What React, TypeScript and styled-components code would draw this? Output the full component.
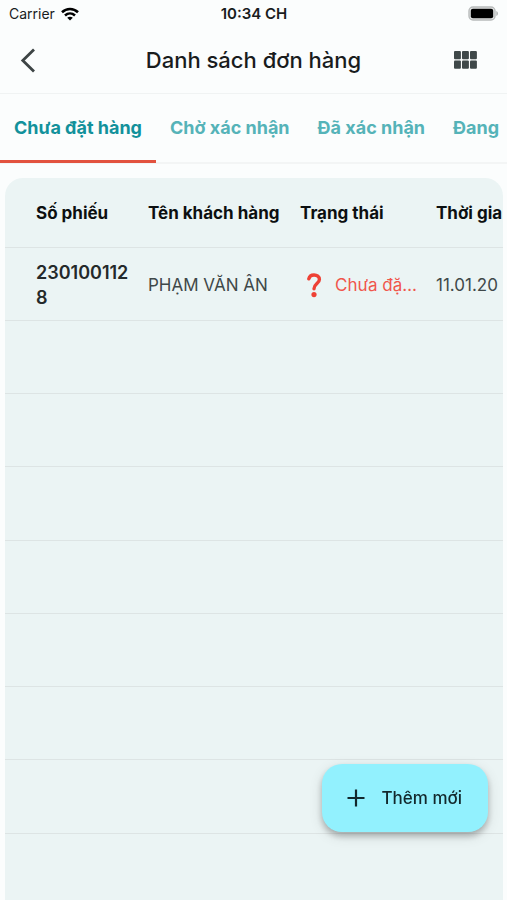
import React from "react";
import styled, { createGlobalStyle } from "styled-components";

const Global = createGlobalStyle`
  *, *::before, *::after { box-sizing: border-box; }
  body {
    margin: 0;
    background: #fbfdfd;
    color: #191c1d;
    font-family: Inter, "Noto Sans", sans-serif;
  }
`;

const ButtonBase = styled.button`
  font: inherit;
  color: inherit;
  border: 0;
  padding: 0;
  background: none;
  cursor: pointer;
`;

const Screen = styled.div`
  height: 100vh;
  display: flex;
  flex-direction: column;
  overflow: hidden;
`;

const StatusBar = styled.div`
  flex: none;
  height: 27px;
  padding: 0 8px 0 9px;
  display: grid;
  grid-template-columns: 1fr auto 1fr;
  align-items: center;
  font-size: 14px;
`;

const Carrier = styled.span`
  display: flex;
  align-items: center;
  gap: 6px;
`;

const Clock = styled.time`
  font-size: 15px;
  font-weight: 600;
`;

const Power = styled.span`
  display: flex;
  justify-content: flex-end;
`;

const AppBar = styled.header`
  flex: none;
  height: 67px;
  padding: 0 16px;
  display: grid;
  grid-template-columns: 48px 1fr 48px;
  align-items: center;
  border-bottom: 1px solid #f0f3f3;
`;

const Title = styled.h1`
  margin: 0;
  text-align: center;
  font-size: 22px;
  line-height: 28px;
  font-weight: 500;
`;

const IconButton = styled(ButtonBase)<{ $end?: boolean }>`
  height: 48px;
  display: flex;
  align-items: center;
  justify-content: ${(p) => (p.$end ? "flex-end" : "flex-start")};
  padding: 0 14px 0 4px;
`;

const Tabs = styled.nav`
  flex: none;
  height: 70px;
  display: flex;
  align-items: flex-start;
  overflow: hidden;
  box-shadow: inset 0 -2px #f3f5f5;
`;

const Tab = styled(ButtonBase)<{ $active?: boolean }>`
  flex: none;
  height: 69px;
  padding: 0 14px;
  font-size: 18px;
  font-weight: 700;
  white-space: nowrap;
  color: ${(p) => (p.$active ? "#12919b" : "#55b3b8")};
  border-bottom: 3px solid ${(p) => (p.$active ? "#e2523f" : "transparent")};
`;

const Panel = styled.main`
  flex: 1;
  min-height: 0;
  margin: 14px 4px 0 5px;
  border-radius: 18px 18px 0 0;
  background: #ebf4f4;
  overflow: hidden;
`;

const Orders = styled.table`
  width: 100%;
  table-layout: fixed;
  border-collapse: separate;
  border-spacing: 0;
  text-align: left;
  font-size: 17px;
  line-height: 25px;
`;

const Col = styled.col<{ $width?: number }>`
  width: ${(p) => (p.$width ? `${p.$width}px` : "auto")};
`;

const HeadCell = styled.th`
  height: 70px;
  padding: 2px 8px 0;
  font-weight: 700;
  white-space: nowrap;
  color: #0c0f10;
  border-bottom: 1px solid #dde4e4;
  &:first-child { padding-left: 31px; }
  &:last-child { padding-right: 0; }
`;

const Row = styled.tr`
  height: 73px;
  &:nth-child(4n) { height: 74px; }
`;

const Cell = styled.td<{ $strong?: boolean }>`
  padding: 2px 8px 0;
  color: ${(p) => (p.$strong ? "#24292a" : "#3f4849")};
  font-size: ${(p) => (p.$strong ? 18 : 17)}px;
  font-weight: ${(p) => (p.$strong ? 600 : 400)};
  word-break: ${(p) => (p.$strong ? "break-all" : "normal")};
  border-bottom: 1px solid #dde4e4;
  &:first-child { padding-left: 31px; }
  &:last-child { padding-right: 0; }
`;

const Status = styled.div`
  display: flex;
  align-items: center;
  gap: 13px;
  padding-left: 7px;
  color: #f0564c;
  svg { flex: none; }
`;

const StatusText = styled.span`
  overflow: hidden;
  text-overflow: ellipsis;
  white-space: nowrap;
`;

const AddButton = styled(ButtonBase)`
  position: fixed;
  right: 19px;
  bottom: 68px;
  height: 68px;
  padding: 0 26px 0 25px;
  display: flex;
  align-items: center;
  gap: 16px;
  border-radius: 20px;
  background: #92f1fe;
  color: #12282c;
  font-size: 17px;
  font-weight: 500;
  box-shadow: 0 4px 6px rgba(0, 0, 0, 0.24), 0 4px 14px rgba(0, 0, 0, 0.12);
`;

const WifiIcon = () => (
  <svg width="18" height="14" viewBox="0 0 18 14" fill="none" stroke="#000" strokeWidth="2.6" aria-hidden="true">
    <path d="M1 5.2C5.6.9 12.4.9 17 5.2" />
    <path d="M4 8.5c3-2.7 7-2.7 10 0" />
    <path d="M9 13.6 6.2 10.8c1.6-1.4 4-1.4 5.6 0z" fill="#000" stroke="none" />
  </svg>
);

const BatteryIcon = () => (
  <svg width="31" height="15" viewBox="0 0 31 15" aria-hidden="true">
    <rect x="1" y="1" width="26" height="13" rx="4" fill="#e4e6e6" stroke="#b8bbbb" strokeWidth="1.4" />
    <rect x="2.8" y="2.8" width="22.4" height="9.4" rx="2" fill="#000" />
    <path d="M28.3 5c2.2.8 2.2 4.2 0 5z" fill="#b0b3b3" />
  </svg>
);

const BackIcon = () => (
  <svg width="16" height="25" viewBox="0 0 16 25" fill="none" stroke="#3d4445" strokeWidth="2.8" aria-hidden="true">
    <path d="M14 1.5 2.8 12.5 14 23.5" />
  </svg>
);

const GridIcon = () => (
  <svg width="23" height="18" viewBox="0 0 23 18" fill="#3f4849" aria-hidden="true">
    {[0, 8, 16].map((x) =>
      [0, 9.4].map((y) => <rect key={`${x}-${y}`} x={x} y={y} width="6.9" height="8.3" rx="1" />)
    )}
  </svg>
);

const QuestionIcon = () => (
  <svg width="15" height="25" viewBox="0 0 15 25" fill="none" aria-hidden="true">
    <path
      d="M1.8 5.8C2.4 3.2 4.6 2 7 2c3 0 5.4 1.700 5.400 4.500 0 4-5.400 4.300-5.400 9.300"
      stroke="#ee4135"
      strokeWidth="3.4"
      strokeLinecap="round"
    />
    <circle cx="7" cy="21.6" r="2.6" fill="#ee4135" />
  </svg>
);

const PlusIcon = () => (
  <svg width="18" height="18" viewBox="0 0 18 18" stroke="#12282c" strokeWidth="2.2" aria-hidden="true">
    <path d="M9 .5v17M.5 9h17" />
  </svg>
);

const tabs = ["Chưa đặt hàng", "Chờ xác nhận", "Đã xác nhận", "Đang"];
const columns = ["Số phiếu", "Tên khách hàng", "Trạng thái", "Thời gia"];
const widths = [135, 152, 136, undefined];
const emptyRows = [1, 2, 3, 4, 5, 6, 7, 8];

export default function App() {
  return (
    <Screen>
      <Global />
      <StatusBar>
        <Carrier>Carrier <WifiIcon /></Carrier>
        <Clock>10:34 CH</Clock>
        <Power><BatteryIcon /></Power>
      </StatusBar>
      <AppBar>
        <IconButton aria-label="Quay lại"><BackIcon /></IconButton>
        <Title>Danh sách đơn hàng</Title>
        <IconButton $end aria-label="Menu"><GridIcon /></IconButton>
      </AppBar>
      <Tabs>
        {tabs.map((label, i) => (
          <Tab key={label} $active={i === 0}>{label}</Tab>
        ))}
      </Tabs>
      <Panel>
        <Orders>
          <colgroup>
            {widths.map((w, i) => <Col key={i} $width={w} />)}
          </colgroup>
          <thead>
            <tr>{columns.map((c) => <HeadCell key={c} scope="col">{c}</HeadCell>)}</tr>
          </thead>
          <tbody>
            <Row>
              <Cell $strong>2301001128</Cell>
              <Cell>PHẠM VĂN ÂN</Cell>
              <Cell>
                <Status>
                  <QuestionIcon />
                  <StatusText>Chưa đặt hàng</StatusText>
                </Status>
              </Cell>
              <Cell>11.01.20</Cell>
            </Row>
            {emptyRows.map((n) => (
              <Row key={n}>{columns.map((c) => <Cell key={c} />)}</Row>
            ))}
          </tbody>
        </Orders>
      </Panel>
      <AddButton><PlusIcon />Thêm mới</AddButton>
    </Screen>
  );
}
